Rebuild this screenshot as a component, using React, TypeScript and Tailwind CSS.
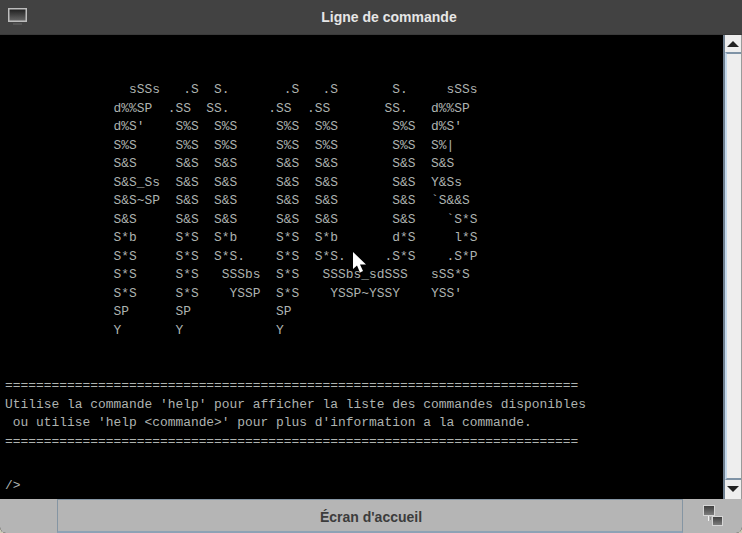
import React from 'react'

const banner = `                sSSs   .S  S.       .S   .S       S.     sSSs
              d%%SP  .SS  SS.     .SS  .SS       SS.   d%%SP
              d%S'    S%S  S%S     S%S  S%S       S%S  d%S'
              S%S     S%S  S%S     S%S  S%S       S%S  S%|
              S&S     S&S  S&S     S&S  S&S       S&S  S&S
              S&S_Ss  S&S  S&S     S&S  S&S       S&S  Y&Ss
              S&S~SP  S&S  S&S     S&S  S&S       S&S  \`S&&S
              S&S     S&S  S&S     S&S  S&S       S&S    \`S*S
              S*b     S*S  S*b     S*S  S*b       d*S     l*S
              S*S     S*S  S*S.    S*S  S*S.     .S*S    .S*P
              S*S     S*S   SSSbs  S*S   SSSbs_sdSSS   sSS*S
              S*S     S*S    YSSP  S*S    YSSP~YSSY    YSS'
              SP      SP           SP
              Y       Y            Y`

const rule = '='.repeat(74)

const welcome = `${rule}
Utilise la commande 'help' pour afficher la liste des commandes disponibles
 ou utilise 'help <commande>' pour plus d'information a la commande.
${rule}`

function WindowIcon() {
  return (
    <svg width="19" height="18" viewBox="0 0 19 18">
      <defs>
        <linearGradient id="screen" x1="0" y1="0" x2="0" y2="1">
          <stop offset="0" stopColor="#1c1c1c" />
          <stop offset="1" stopColor="#6a6a6a" />
        </linearGradient>
      </defs>
      <rect x="0.75" y="0.75" width="17.5" height="12.5" fill="url(#screen)" stroke="#bdbdbd" strokeWidth="1.5" />
      <rect x="5" y="15.5" width="9" height="1" fill="#666" />
    </svg>
  )
}

function NetworkIcon() {
  return (
    <svg width="22" height="22" viewBox="0 0 22 22">
      <defs>
        <linearGradient id="node" x1="0" y1="0" x2="0" y2="1">
          <stop offset="0" stopColor="#3c3c3c" />
          <stop offset="1" stopColor="#808080" />
        </linearGradient>
      </defs>
      <rect x="1.5" y="0.5" width="11" height="10" fill="url(#node)" stroke="#d6d6d6" />
      <rect x="10.5" y="11.5" width="10" height="9" fill="url(#node)" stroke="#d6d6d6" />
      <path d="M6.5 11v5" fill="none" stroke="#f2f2f2" />
      <path d="M8.5 12v3" fill="none" stroke="#8c8c8c" />
    </svg>
  )
}

function MouseCursor() {
  return (
    <svg className="absolute left-[353px] top-[217px]" width="14" height="22" viewBox="0 0 14 22">
      <path d="M0 0V17L4 13.5L7 20.5L10 19L7 12.5H13Z" fill="#ffffff" />
    </svg>
  )
}

function ScrollButton({ up }: { up?: boolean }) {
  return (
    <div className="h-[17px] shrink-0 flex items-center justify-center bg-[#eeeeee]">
      <div
        className={
          up
            ? 'w-0 h-0 border-x-[6px] border-x-transparent border-b-[6px] border-b-[#222]'
            : 'w-0 h-0 border-x-[6px] border-x-transparent border-t-[6px] border-t-[#222]'
        }
      />
    </div>
  )
}

export default function App() {
  return (
    <div className="w-[742px] h-[533px] bg-[#cfcdb8]">
      <div className="h-full flex flex-col overflow-hidden rounded-b-[6px] bg-black font-['Liberation_Sans',sans-serif]">
        {/* barre de titre */}
        <header className="h-[35px] shrink-0 flex items-center bg-[#424242] border-b border-[#3a3a3a] pl-2">
          <WindowIcon />
          <h1 className="flex-1 text-center text-sm font-bold text-[#e6e6e6] pl-[9px]">Ligne de commande</h1>
        </header>

        {/* terminal */}
        <div className="relative flex-1 min-h-0 flex">
          <main className="flex-1 min-w-0 pl-[5px] pt-[46px] text-[12.92px] leading-[18.5px] text-[#aeb3b0]">
            <pre className="font-['Liberation_Mono',monospace]">{banner}</pre>
            <pre className="font-['Liberation_Mono',monospace] mt-[37px]">{welcome}</pre>
            <pre className="font-['Liberation_Mono',monospace] mt-[26px]">/&gt;</pre>
          </main>
          <MouseCursor />
          <aside className="w-[19px] shrink-0 flex flex-col bg-[#eeeeee] border-l-2 border-l-[#6f7f8f] border-r border-r-[#9a9a9a] pb-[2px]">
            <ScrollButton up />
            <div className="flex-1 border-y-2 border-y-[#7f93a6] border-l-2 border-l-[#c4d8ea]" />
            <ScrollButton />
          </aside>
        </div>

        {/* barre du bas */}
        <footer className="h-[34px] shrink-0 flex items-stretch bg-[#b5b5b5]">
          <div className="w-[57px]" />
          <button className="w-[626px] pl-[2px] pt-[2px] bg-[#b5b5b5] border-x border-t border-[#8595a3] border-b-2 border-b-[#8ea2b5] text-sm font-bold text-[#3c3c3c]">
            Écran d'accueil
          </button>
          <div className="flex-1 flex items-center justify-center">
            <NetworkIcon />
          </div>
        </footer>
      </div>
    </div>
  )
}
